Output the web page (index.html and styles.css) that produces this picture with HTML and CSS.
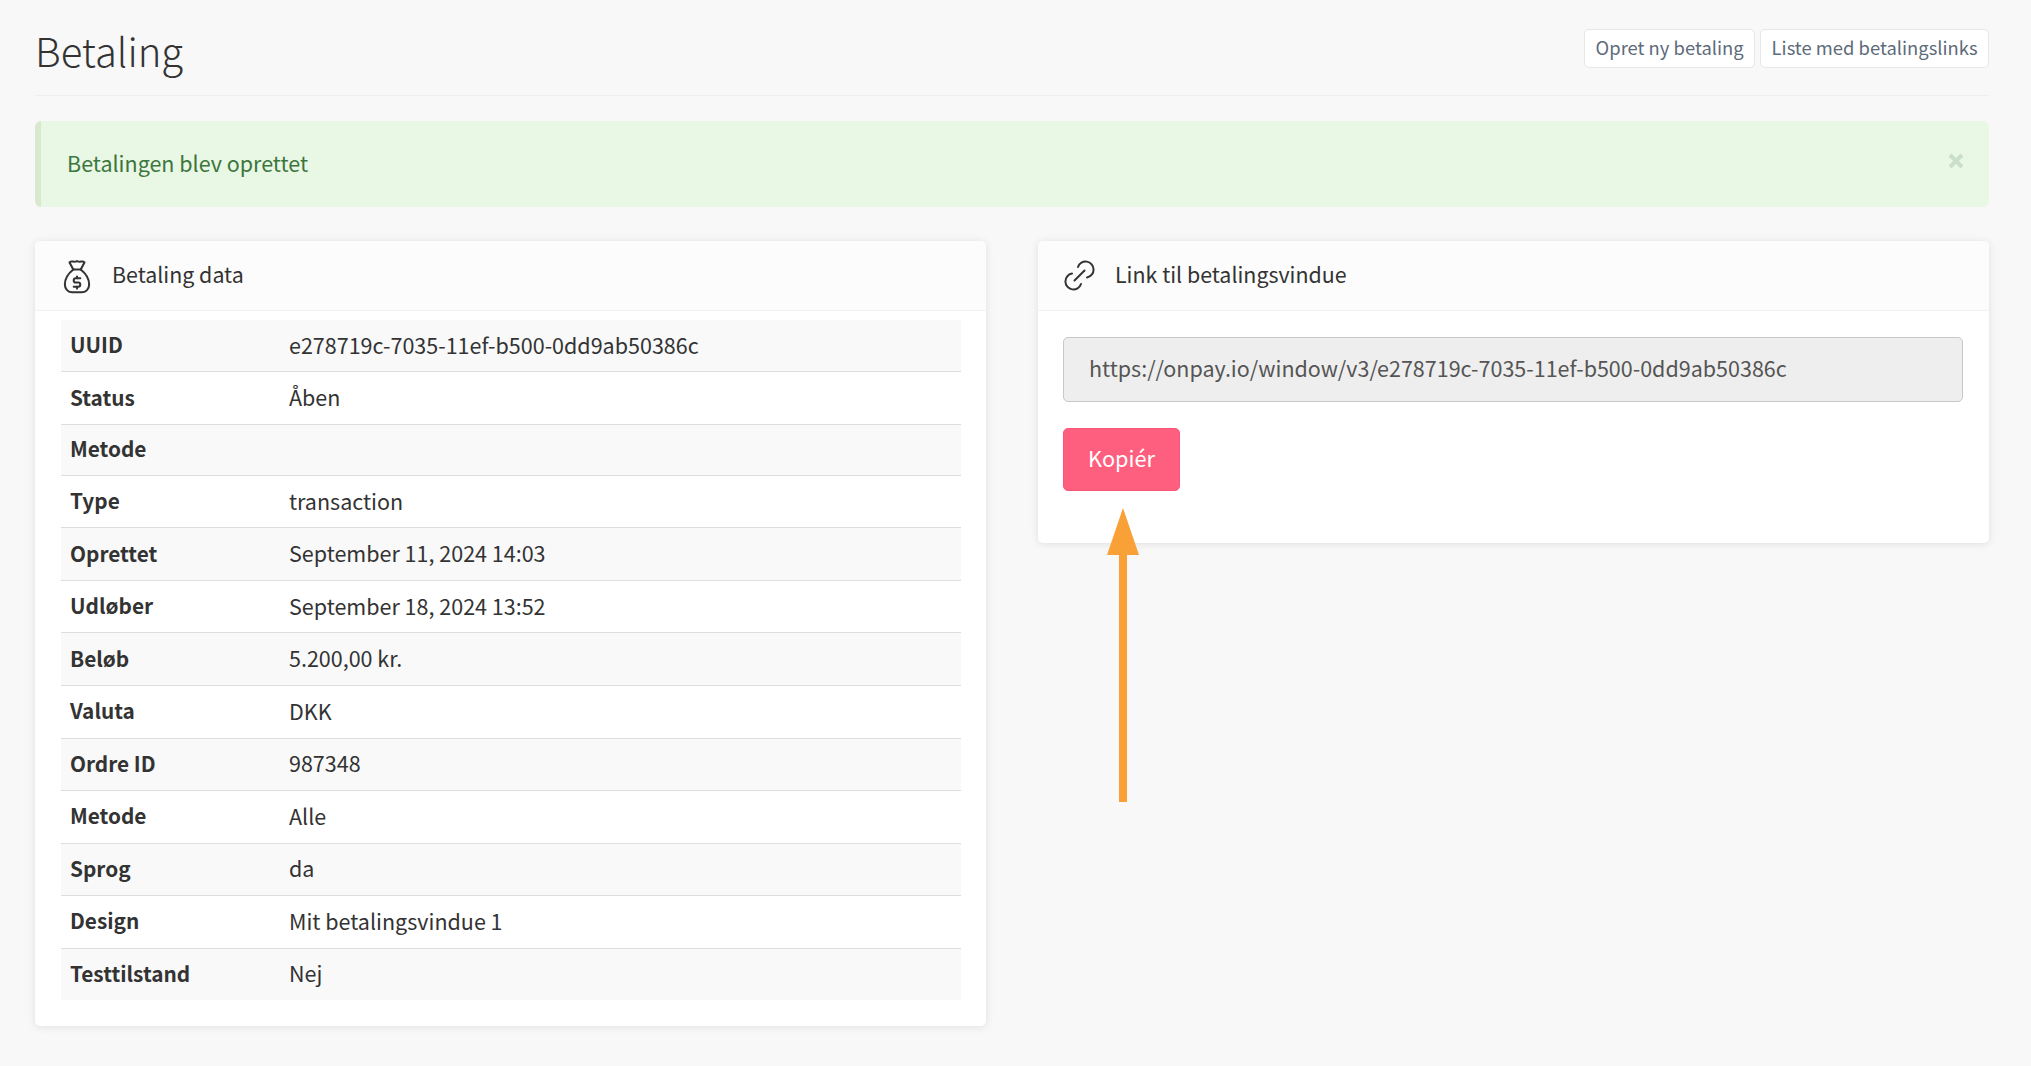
FILE: index.html
```html
<!DOCTYPE html>
<html lang="da">
<head>
    <meta charset="UTF-8">
    <meta name="viewport" content="width=device-width, initial-scale=1.0">
    <title>Betaling</title>
    <link rel="stylesheet" href="styles.css">
</head>
<body>
    <header class="page-header">
        <h1>Betaling</h1>
        <div class="header-actions">
            <a href="#" class="btn-small">Opret ny betaling</a>
            <a href="#" class="btn-small">Liste med betalingslinks</a>
        </div>
    </header>

    <div class="alert">
        <span>Betalingen blev oprettet</span>
        <span class="alert-close">
            <svg width="16" height="16" viewBox="0 0 16 16"><path d="M2 2 14 14M14 2 2 14" fill="none" stroke="currentColor" stroke-width="4"/></svg>
        </span>
    </div>

    <div class="columns">
        <section class="card">
            <div class="card-header">
                <svg class="card-icon icon-bag" width="28" height="36" viewBox="0 0 30 38" fill="none" stroke="currentColor" stroke-width="2.200" stroke-linecap="round" stroke-linejoin="round">
                    <path d="M11 12 7 4.500C9 2 11.500 5 15 3C18.500 5 21 2 23 4.500L19 12"/>
                    <path d="M11 12H19"/>
                    <path d="M11 12C6 16 2 22 2 28C2 33 5.500 36.500 10 36.500H20C24.500 36.500 28 33 28 28C28 22 24 16 19 12"/>
                    <path d="M18.500 21.500H13.500Q11.500 21.500 11.500 23.800Q11.500 26 13.500 26H16.500Q18.500 26 18.500 28.200Q18.500 30.500 16.500 30.500H11.500"/>
                    <path d="M15 19.500V21.500M15 30.500V32.500"/>
                </svg>
                <h2>Betaling data</h2>
            </div>
            <div class="card-body">
                <table class="data-table">
                    <tr><th>UUID</th><td>e278719c-7035-11ef-b500-0dd9ab50386c</td></tr>
                    <tr><th>Status</th><td>Åben</td></tr>
                    <tr><th>Metode</th><td></td></tr>
                    <tr><th>Type</th><td>transaction</td></tr>
                    <tr><th>Oprettet</th><td>September 11, 2024 14:03</td></tr>
                    <tr><th>Udløber</th><td>September 18, 2024 13:52</td></tr>
                    <tr><th>Beløb</th><td>5.200,00 kr.</td></tr>
                    <tr><th>Valuta</th><td>DKK</td></tr>
                    <tr><th>Ordre ID</th><td>987348</td></tr>
                    <tr><th>Metode</th><td>Alle</td></tr>
                    <tr><th>Sprog</th><td>da</td></tr>
                    <tr><th>Design</th><td>Mit betalingsvindue 1</td></tr>
                    <tr><th>Testtilstand</th><td>Nej</td></tr>
                </table>
            </div>
        </section>

        <section class="card card-link">
            <div class="card-header">
                <svg class="card-icon" width="31" height="31" viewBox="0 0 31 31" fill="none" stroke="currentColor" stroke-width="2" stroke-linecap="round">
                    <path d="M14 7A8 8 0 1 1 23 17.400"/>
                    <path d="M17 24A8 8 0 1 1 8 13.600"/>
                    <path d="M10.500 20.500 20.500 10.500"/>
                </svg>
                <h2>Link til betalingsvindue</h2>
            </div>
            <div class="card-body link-body">
                <div class="url-field">https://onpay.io/window/v3/e278719c-7035-11ef-b500-0dd9ab50386c</div>
                <button class="btn-copy">Kopiér</button>
            </div>
        </section>
    </div>

    <svg class="arrow" width="32" height="294" viewBox="0 0 32 294">
        <path d="M16 0 32 47H20V294H12V47H0Z" fill="#f9a136"/>
    </svg>
</body>
</html>
```

FILE: styles.css
```css
body {
    font-family: "Noto Sans CJK SC", "Open Sans", sans-serif;
    font-size: 21.5px;
    margin: 0;
    padding: 0 42px 40px 35px;
    background-color: #f8f8f8;
    color: #333;
    position: relative;
    height: 1066px;
    box-sizing: border-box;
    overflow: hidden;
}

.page-header {
    display: flex;
    justify-content: space-between;
    align-items: flex-start;
    height: 95px;
    border-bottom: 1px solid #eeeeee;
}

.page-header h1 {
    margin: 18px 0 0 0;
    font-size: 40px;
    line-height: 64px;
    font-weight: 300;
    color: #333;
}

.header-actions {
    display: flex;
    gap: 5px;
    margin-top: 29px;
}

.btn-small {
    display: block;
    height: 39px;
    line-height: 35px;
    padding: 0 10.5px;
    box-sizing: border-box;
    background-color: #fff;
    border: 1px solid #e5e7e9;
    border-radius: 5px;
    font-size: 18.4px;
    color: #5d6b7a;
    text-decoration: none;
}

.alert {
    display: flex;
    justify-content: space-between;
    margin-top: 25px;
    height: 86px;
    box-sizing: border-box;
    padding: 0 25px 3px 26px;
    align-items: center;
    background-color: #e9f7e5;
    border-left: 6px solid #d8e9cd;
    border-radius: 6px;
    color: #3c763d;
    font-size: 21.5px;
}

.alert-close {
    color: #c9dfca;
    display: flex;
    margin-top: -4px;
}

.columns {
    display: grid;
    grid-template-columns: 951px 951px;
    gap: 52px;
    margin-top: 34px;
    align-items: start;
}

.card {
    background-color: #fff;
    border-radius: 5px;
    box-shadow: 0 1px 8px rgba(0, 0, 0, 0.1);
}

.card-header {
    display: flex;
    align-items: center;
    gap: 20px;
    height: 70px;
    padding-left: 26px;
    box-sizing: border-box;
    background-color: #fcfcfc;
    border-bottom: 1px solid #f1f1f1;
    border-radius: 5px 5px 0 0;
}

.card-icon {
    color: #333;
    flex-shrink: 0;
}

.icon-bag {
    margin-left: 2px;
    margin-right: 1px;
}

.card-header h2 {
    margin: 0 0 5px 0;
    font-size: 21.4px;
    font-weight: 400;
}

.card-body {
    padding: 9px 25px 26px 26px;
}

.data-table {
    width: 100%;
    height: 680px;
    border-collapse: collapse;
}

.data-table tr:nth-child(odd) {
    background-color: #f9f9f9;
}

.data-table tr + tr th,
.data-table tr + tr td {
    border-top: 1px solid #dddddd;
}

.data-table th,
.data-table td {
    padding: 0 9px 3px 9px;
    box-sizing: border-box;
    text-align: left;
    font-size: 21.5px;
}

.data-table th {
    width: 219px;
    font-weight: 700;
    font-size: 20.8px;
}

.data-table td {
    font-weight: 400;
}

.link-body {
    padding: 26px 26px 52px 25px;
}

.url-field {
    height: 65px;
    line-height: 59px;
    padding-left: 25px;
    box-sizing: border-box;
    background-color: #eeeeee;
    border: 1px solid #c8c8c8;
    border-radius: 5px;
    color: #555;
    font-size: 21.5px;
}

.btn-copy {
    display: block;
    margin-top: 26px;
    width: 117px;
    height: 63px;
    padding: 0 0 5px 0;
    background-color: #ff5f7e;
    border: 1px solid #f9567a;
    border-radius: 5px;
    color: #fff;
    font-family: inherit;
    font-size: 21.7px;
}

.arrow {
    position: absolute;
    left: 1107px;
    top: 508px;
}
```
